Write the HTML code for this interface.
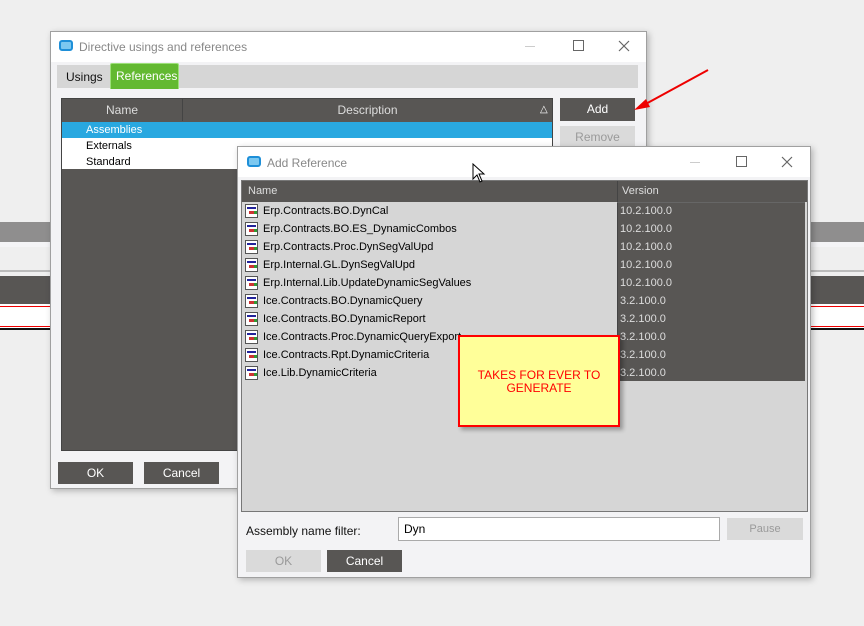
<!DOCTYPE html><html><head><style>
*{margin:0;padding:0;box-sizing:border-box}
body{width:864px;height:626px;background:#efefef;position:relative;overflow:hidden;font-family:"Liberation Sans",Arial,sans-serif;font-size:11px}
.a{position:absolute}
.btn{position:absolute;background:#585654;color:#fff;text-align:center;font-size:12px}
.dis{background:#dadada;color:#9a9a9a}
.t{color:#888;font-size:12px}
.ico{position:absolute;width:14px;height:11px;border:2px solid #1e8fd8;border-radius:3px;background:#7cc8f0}
.row{position:absolute;left:0;height:18px;line-height:18px;font-size:11px}
.fi{display:inline-block;width:13px;height:14px;border:1px solid #555;background:#fff;vertical-align:middle;margin:0 5px 0 3px;position:relative}
.fi:before{content:"";position:absolute;left:1px;top:2px;width:9px;height:2px;background:#22229a}
.fi:after{content:"";position:absolute;left:3px;top:6px;width:5px;height:3px;background:#c33;box-shadow:3px 0 0 #393}
</style></head><body>
<div class="a" style="left:0;top:222px;width:864px;height:20px;background:#8f8e8e"></div>
<div class="a" style="left:0;top:242px;width:864px;height:5px;background:#f4f4f6"></div>
<div class="a" style="left:0;top:270px;width:864px;height:2px;background:#bbb"></div>
<div class="a" style="left:0;top:276px;width:864px;height:28px;background:#585654"></div>
<div class="a" style="left:0;top:304px;width:864px;height:24px;background:#fff"></div>
<div class="a" style="left:0;top:306px;width:864px;height:1px;background:#e00"></div>
<div class="a" style="left:0;top:326px;width:864px;height:1px;background:#e00"></div>
<div class="a" style="left:0;top:328px;width:864px;height:2px;background:#111"></div>

<div class="a" style="left:50px;top:31px;width:597px;height:458px;background:#f3f3f5;border:1px solid #a0a0a0;box-shadow:2px 2px 6px rgba(0,0,0,.25)">
 <div class="a" style="left:0;top:0;width:595px;height:30px;background:#fff"></div>
 <div class="ico" style="left:8px;top:8px"></div>
 <div class="a t" style="left:28px;top:8px">Directive usings and references</div>
 <div class="a" style="left:474px;top:14px;width:10px;height:1px;background:#ccc"></div>
 <div class="a" style="left:522px;top:8px;width:11px;height:11px;border:1px solid #666"></div>
 <svg class="a" style="left:567px;top:8px" width="12" height="12"><path d="M1 1L11 11M11 1L1 11" stroke="#666" stroke-width="1.2"/></svg>
 <div class="a" style="left:6px;top:33px;width:581px;height:23px;background:#d6d6d6"></div>
 <div class="a" style="left:15px;top:38px;font-size:12px;color:#111">Usings</div>
 <div class="a" style="left:59px;top:31px;width:69px;height:26px;background:#63b931;border:1px solid #9de07a;border-bottom:none;border-radius:2px 2px 0 0;color:#fff;font-size:12px;padding:5px 0 0 5px">References</div>
 <div class="a" style="left:10px;top:66px;width:492px;height:353px;background:#585654;border:1px solid #444">
  <div class="a" style="left:0;top:0;width:121px;height:22px;border-right:1px solid #444;color:#ddd;text-align:center;line-height:22px;font-size:12px">Name</div>
  <div class="a" style="left:121px;top:0;width:369px;height:22px;color:#ddd;text-align:center;line-height:22px;font-size:12px">Description</div>
  <div class="a" style="left:478px;top:5px;color:#fff;font-size:10px">△</div>
  <div class="a" style="left:0;top:23px;width:490px;height:47px;background:#fff"></div>
  <div class="row" style="top:23px;width:490px;height:16px;line-height:16px;background:#29a8e0;color:#fff;padding-left:24px">Assemblies</div>
  <div class="row" style="top:39px;height:16px;line-height:16px;padding-left:24px">Externals</div>
  <div class="row" style="top:55px;height:16px;line-height:16px;padding-left:24px">Standard</div>
 </div>
 <div class="btn" style="left:509px;top:66px;width:75px;height:23px;line-height:23px">Add</div>
 <div class="btn dis" style="left:509px;top:94px;width:75px;height:22px;line-height:22px">Remove</div>
 <div class="btn" style="left:7px;top:430px;width:75px;height:22px;line-height:22px">OK</div>
 <div class="btn" style="left:93px;top:430px;width:75px;height:22px;line-height:22px">Cancel</div>
</div>

<svg class="a" style="left:630px;top:66px" width="84" height="48"><line x1="78" y1="4" x2="12" y2="40" stroke="#e00" stroke-width="2"/><polygon points="4,44 16,33 20,41" fill="#e00"/></svg>

<div class="a" style="left:237px;top:146px;width:574px;height:432px;background:#f3f3f5;border:1px solid #a0a0a0;box-shadow:2px 2px 6px rgba(0,0,0,.25)">
 <div class="a" style="left:0;top:0;width:572px;height:30px;background:#fff"></div>
 <div class="ico" style="left:9px;top:9px"></div>
 <div class="a t" style="left:29px;top:9px">Add Reference</div>
 <div class="a" style="left:452px;top:15px;width:10px;height:1px;background:#ccc"></div>
 <div class="a" style="left:498px;top:9px;width:11px;height:11px;border:1px solid #666"></div>
 <svg class="a" style="left:543px;top:9px" width="12" height="12"><path d="M1 1L11 11M11 1L1 11" stroke="#666" stroke-width="1.2"/></svg>
 <div class="a" style="left:3px;top:33px;width:567px;height:332px;background:#d6d6d6;border:1px solid #777">
  <div class="a" style="left:0;top:0;width:565px;height:21px;background:#585654"></div>
  <div class="a" style="left:6px;top:4px;color:#ddd;font-size:11px">Name</div>
  <div class="a" style="left:375px;top:0;width:188px;height:200px;background:#585654;border-left:1px solid #444"></div>
  <div class="a" style="left:380px;top:4px;color:#ddd;font-size:11px">Version</div>
  <div class="a" style="left:375px;top:21px;width:188px;height:1px;background:#666"></div>
 </div>
 <div class="a" style="left:4px;top:55px;width:560px">
  <div class="row" style="top:0"><span class="fi"></span>Erp.Contracts.BO.DynCal</div>
  <div class="row" style="top:18px"><span class="fi"></span>Erp.Contracts.BO.ES_DynamicCombos</div>
  <div class="row" style="top:36px"><span class="fi"></span>Erp.Contracts.Proc.DynSegValUpd</div>
  <div class="row" style="top:54px"><span class="fi"></span>Erp.Internal.GL.DynSegValUpd</div>
  <div class="row" style="top:72px"><span class="fi"></span>Erp.Internal.Lib.UpdateDynamicSegValues</div>
  <div class="row" style="top:90px"><span class="fi"></span>Ice.Contracts.BO.DynamicQuery</div>
  <div class="row" style="top:108px"><span class="fi"></span>Ice.Contracts.BO.DynamicReport</div>
  <div class="row" style="top:126px"><span class="fi"></span>Ice.Contracts.Proc.DynamicQueryExport</div>
  <div class="row" style="top:144px"><span class="fi"></span>Ice.Contracts.Rpt.DynamicCriteria</div>
  <div class="row" style="top:162px"><span class="fi"></span>Ice.Lib.DynamicCriteria</div>
 </div>
 <div class="a" style="left:382px;top:55px;color:#ddd;line-height:18px;font-size:11px">10.2.100.0<br>10.2.100.0<br>10.2.100.0<br>10.2.100.0<br>10.2.100.0<br>3.2.100.0<br>3.2.100.0<br>3.2.100.0<br>3.2.100.0<br>3.2.100.0</div>
 <div class="a" style="left:8px;top:377px;font-size:12px;color:#111">Assembly name filter:</div>
 <div class="a" style="left:160px;top:370px;width:322px;height:24px;background:#fff;border:1px solid #aaa;padding:4px 5px;font-size:12px">Dyn</div>
 <div class="btn dis" style="left:489px;top:371px;width:76px;height:22px;line-height:22px;font-size:11px">Pause</div>
 <div class="btn dis" style="left:8px;top:403px;width:75px;height:22px;line-height:22px">OK</div>
 <div class="btn" style="left:89px;top:403px;width:75px;height:22px;line-height:22px">Cancel</div>
</div>

<div class="a" style="left:458px;top:335px;width:162px;height:92px;background:#ffff99;border:2px solid #f00;box-shadow:3px 3px 4px rgba(0,0,0,.3);color:#f00;text-align:center;font-size:12px;padding-top:32px;line-height:13px">TAKES FOR EVER TO<br>GENERATE</div>

<svg class="a" style="left:472px;top:163px" width="14" height="22"><path d="M1 1 L1 16 L5 12 L8 19 L10 18 L7 11 L12 11 Z" fill="#fff" stroke="#000" stroke-width="1"/></svg>
</body></html>
